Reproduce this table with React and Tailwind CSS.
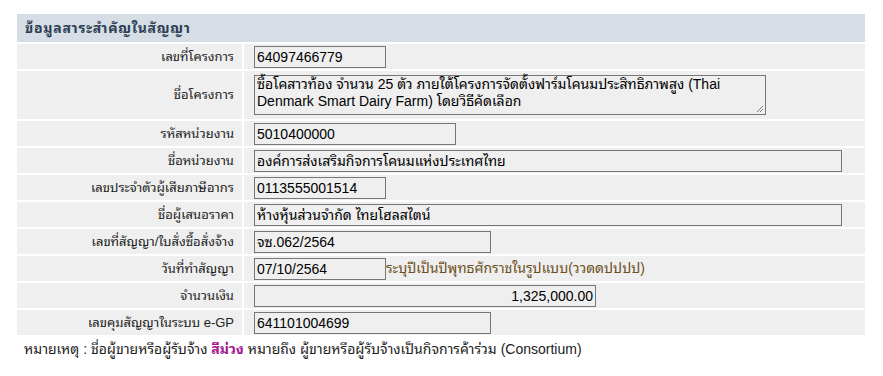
import React from "react";

const font = {
  fontFamily:
    'Tahoma, "Liberation Sans", "Noto Sans Thai Looped", Loma, Garuda, "Noto Sans Thai", "Noto Sans", sans-serif',
};

function Field({ width, value, align = "left" }) {
  return (
    <div
      className={`h-[22px] border border-[#767676] bg-[#efefef] px-[2px] text-[14px] leading-[20px] text-black whitespace-nowrap overflow-hidden ${width} ${
        align === "right" ? "text-right" : "text-left"
      }`}
    >
      {value}
    </div>
  );
}

function Row({ label, children, tall }) {
  return (
    <>
      <div
        className={`bg-[#efefef] flex items-center justify-end pr-[8px] text-[13px] text-[#222] ${
          tall ? "h-[48px]" : "h-[25px]"
        }`}
      >
        {label}
      </div>
      <div
        className={`bg-[#efefef] flex items-center pl-[10px] ${tall ? "h-[48px]" : "h-[25px]"}`}
      >
        {children}
      </div>
    </>
  );
}

export default function App() {
  return (
    <div className="bg-white w-[883px] h-[376px] pt-[14px] pl-[17px]" style={font}>
      <div className="w-[848px] grid grid-cols-[225px_1fr] gap-[2px]">
        <div className="col-span-2 h-[28px] bg-[#d6dde4] flex items-center pl-[8px] text-[14px] tracking-[0.7px] font-bold text-[#2c3e55]">
          ข้อมูลสาระสำคัญในสัญญา
        </div>
        <Row label="เลขที่โครงการ">
          <Field width="w-[132px]" value="64097466779" />
        </Row>
        <Row label="ชื่อโครงการ" tall>
          <div className="relative w-[512px] h-[40px] border border-[#767676] bg-[#efefef] pl-[2px] pr-[10px] text-[14px] leading-[17px] text-black">
            ซื้อโคสาวท้อง จำนวน 25 ตัว ภายใต้โครงการจัดตั้งฟาร์มโคนมประสิทธิภาพสูง (Thai Denmark Smart Dairy Farm) โดยวิธีคัดเลือก
            <svg className="absolute right-[1px] bottom-[1px]" width="9" height="9" viewBox="0 0 9 9">
              <path d="M8 2 L2 8 M8 5 L5 8" stroke="#7a7a7a" strokeWidth="1" />
            </svg>
          </div>
        </Row>
        <Row label="รหัสหน่วยงาน">
          <Field width="w-[202px]" value="5010400000" />
        </Row>
        <Row label="ชื่อหน่วยงาน">
          <Field width="w-[588px]" value="องค์การส่งเสริมกิจการโคนมแห่งประเทศไทย" />
        </Row>
        <Row label="เลขประจำตัวผู้เสียภาษีอากร">
          <Field width="w-[132px]" value="0113555001514" />
        </Row>
        <Row label="ชื่อผู้เสนอราคา">
          <Field width="w-[588px]" value="ห้างหุ้นส่วนจำกัด ไทยโฮลสไตน์" />
        </Row>
        <Row label="เลขที่สัญญา/ใบสั่งซื้อสั่งจ้าง">
          <Field width="w-[237px]" value="จซ.062/2564" />
        </Row>
        <Row label="วันที่ทำสัญญา">
          <Field width="w-[132px]" value="07/10/2564" />
          <span className="text-[14px] text-[#6e4f1c] whitespace-nowrap">
            ระบุปีเป็นปีพุทธศักราชในรูปแบบ(ววดดปปปป)
          </span>
        </Row>
        <Row label="จำนวนเงิน">
          <Field width="w-[342px]" value="1,325,000.00" align="right" />
        </Row>
        <Row label="เลขคุมสัญญาในระบบ e-GP">
          <Field width="w-[237px]" value="641101004699" />
        </Row>
      </div>
      <div className="pl-[7px] pt-[4px] text-[14px] text-[#222]">
        หมายเหตุ : ชื่อผู้ขายหรือผู้รับจ้าง{" "}
        <span className="font-bold text-[#a3158f]">สีม่วง</span> หมายถึง
        ผู้ขายหรือผู้รับจ้างเป็นกิจการค้าร่วม (Consortium)
      </div>
    </div>
  );
}
